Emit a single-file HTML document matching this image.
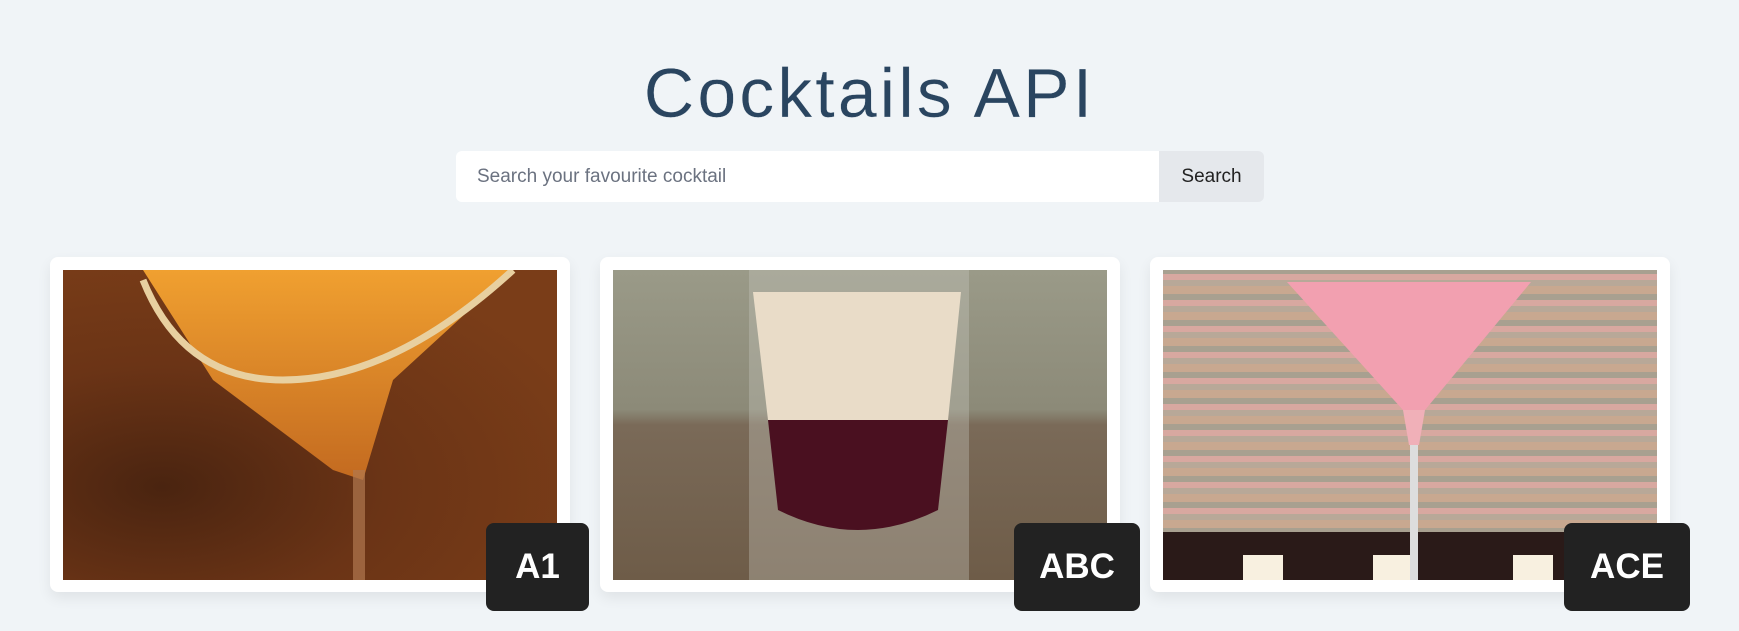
<!DOCTYPE html>
<html><head><meta charset="utf-8"><style>
body{margin:0;width:1739px;height:631px;background:#f0f4f7;font-family:"Liberation Sans",sans-serif;position:relative;overflow:hidden}
h1{position:absolute;left:0;right:0;top:48px;margin:0;text-align:center;font-weight:300;font-size:70px;letter-spacing:3px;color:#2a4560;line-height:90px;-webkit-text-stroke:0.3px #f0f4f7}
.in{position:absolute;left:456px;top:151px;width:703px;height:51px;background:#fff;border-radius:6px 0 0 6px;box-sizing:border-box;padding-left:21px;line-height:51px;font-size:19px;color:#6b7280}
.bt{position:absolute;left:1159px;top:151px;width:105px;height:51px;background:#e5e8ec;border-radius:0 6px 6px 0;text-align:center;line-height:51px;font-size:19px;color:#222}
.card{position:absolute;top:257px;width:520px;height:335px;background:#fff;border-radius:8px;box-shadow:0 6px 14px rgba(0,0,0,.07)}
.img{position:absolute;top:13px;left:13px;width:494px;height:310px;overflow:hidden}
.b{position:absolute;top:523px;height:88px;background:#222;border-radius:8px;color:#fff;font-size:35px;font-weight:bold;text-align:center;line-height:88px}
</style></head><body>
<h1>Cocktails API</h1>
<div class="in">Search your favourite cocktail</div>
<div class="bt">Search</div>

<div class="card" style="left:50px"><div class="img" style="background:radial-gradient(ellipse at 20% 70%,#4a2410,#6b3416 40%,#7a3d18 80%)">
<svg width="494" height="310"><defs><linearGradient id="o" x1="0" y1="0" x2="0" y2="1"><stop offset="0" stop-color="#f0a030"/><stop offset="1" stop-color="#c36a20"/></linearGradient></defs>
<polygon points="80,0 450,0 330,110 300,210 270,200 150,110" fill="url(#o)"/>
<path d="M80,10 Q120,110 220,110 Q330,110 450,0" fill="none" stroke="#e8d0a0" stroke-width="7"/>
<rect x="290" y="200" width="12" height="110" fill="#b07850" opacity=".7"/></svg></div></div>

<div class="card" style="left:600px"><div class="img" style="background:linear-gradient(#9a9a88,#8c8a78 45%,#7a6a58 50%,#6e5c48)">
<svg width="494" height="310"><rect x="136" y="0" width="220" height="310" fill="#c8c8c0" opacity=".35"/>
<path d="M140,22 H348 L335,150 H155 Z" fill="#e9dcc8"/>
<path d="M155,150 H335 L325,240 Q245,280 165,240 Z" fill="#4a1020"/></svg></div></div>

<div class="card" style="left:1150px"><div class="img" style="background:repeating-linear-gradient(0deg,#c8a890 0 8px,#b8a898 8px 14px,#d8a8a0 14px 20px,#a8a090 20px 26px)">
<svg width="494" height="310"><rect x="0" y="262" width="494" height="48" fill="#2a1a18"/>
<rect x="80" y="285" width="40" height="25" fill="#f8f0e0"/><rect x="210" y="285" width="40" height="25" fill="#f8f0e0"/><rect x="350" y="285" width="40" height="25" fill="#f8f0e0"/>
<path d="M124,12 H368 L262,140 H240 Z" fill="#f2a0b0"/><path d="M240,140 H262 L256,175 H246Z" fill="#f0b0b8"/>
<rect x="247" y="175" width="8" height="135" fill="#ddd"/></svg></div></div>

<div class="b" style="left:486px;width:103px">A1</div>
<div class="b" style="left:1014px;width:126px">ABC</div>
<div class="b" style="left:1564px;width:126px">ACE</div>
</body></html>
